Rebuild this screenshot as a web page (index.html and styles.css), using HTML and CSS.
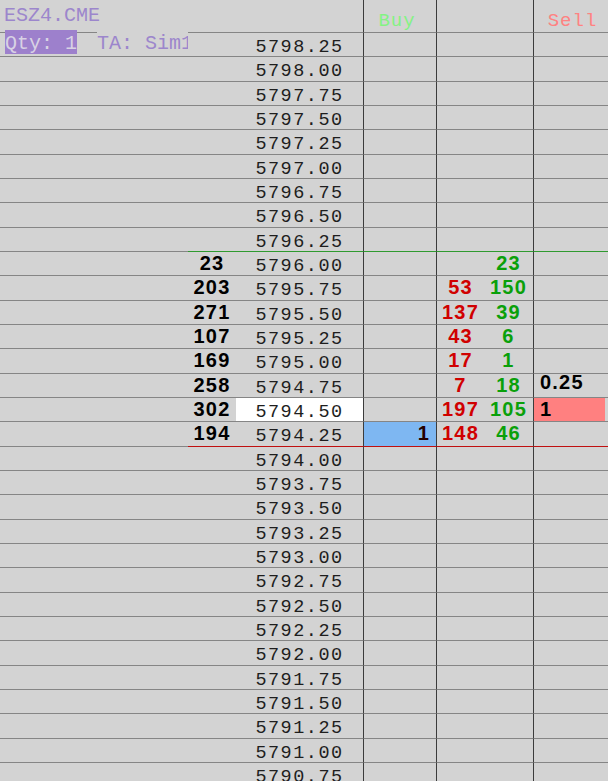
FILE: index.html
```html
<!DOCTYPE html>
<html lang="en">
<head>
  <meta charset="UTF-8" />
  <title>ESZ4.CME - Price Ladder</title>
  <meta name="viewport" content="width=device-width, initial-scale=1.0" />
  <link rel="stylesheet" href="styles.css">
</head>
<body>
  <div id="ladder" class="ladder">
    <!-- Header row -->
    <div class="row header">
      <div class="cell info"><span class="symbol">ESZ4.CME</span></div>
      <div class="cell vol"></div>
      <div class="cell price"></div>
      <div class="cell buy"><span class="buy-label">Buy</span></div>
      <div class="cell bid"></div>
      <div class="cell ask"></div>
      <div class="cell sell"><span class="sell-label">Sell</span></div>
      <div class="cell pad"></div>
    </div>
  </div>

  <script>
    const book = {
      "5796.00": { vol: 23, ask: 23 },
      "5795.75": { vol: 203, bid: 53, ask: 150 },
      "5795.50": { vol: 271, bid: 137, ask: 39 },
      "5795.25": { vol: 107, bid: 43, ask: 6 },
      "5795.00": { vol: 169, bid: 17, ask: 1 },
      "5794.75": { vol: 258, bid: 7, ask: 18, tick: "0.25" },
      "5794.50": { vol: 302, bid: 197, ask: 105, sell: 1, last: true },
      "5794.25": { vol: 194, bid: 148, ask: 46, buy: 1 }
    };

    const topPrice = 5798.25;
    const rowCount = 31;
    const askEdge = "5796.25";
    const bidEdge = "5794.25";

    function cell(cls, text) {
      const div = document.createElement("div");
      div.className = "cell " + cls;
      if (text !== undefined) div.textContent = text;
      return div;
    }

    function buildRow(price, index) {
      const data = book[price] || {};
      const row = document.createElement("div");
      row.className = "row";
      if (price === askEdge) row.classList.add("ask-edge");
      if (price === bidEdge) row.classList.add("bid-edge");

      const info = cell("info");
      if (index === 0) {
        info.innerHTML =
          '<div class="account"><span class="qty">Qty: 1</span><span class="ta">TA: Sim1</span></div>';
      }
      row.appendChild(info);

      row.appendChild(cell("vol num", data.vol));

      const priceCell = cell("price", price);
      if (data.last) priceCell.classList.add("last");
      row.appendChild(priceCell);

      const buy = cell("buy num", data.buy);
      if (data.buy) buy.classList.add("working");
      row.appendChild(buy);

      row.appendChild(cell("bid num", data.bid));
      row.appendChild(cell("ask num", data.ask));

      const sell = cell("sell num");
      if (data.sell) {
        sell.textContent = data.sell;
        sell.classList.add("working");
      } else if (data.tick) {
        sell.innerHTML = '<span class="tick">' + data.tick + '</span>';
      }
      row.appendChild(sell);

      row.appendChild(cell("pad"));
      return row;
    }

    const ladder = document.getElementById("ladder");
    for (let i = 0; i < rowCount; i++) {
      const price = (topPrice - i * 0.25).toFixed(2);
      ladder.appendChild(buildRow(price, i));
    }
  </script>
</body>
</html>
```

FILE: styles.css
```css
* {
  box-sizing: border-box;
}

body {
  margin: 0;
  background: #d3d3d3;
  height: 100vh;
  overflow: hidden;
  font-family: "Liberation Mono", monospace;
}

.ladder {
  width: 608px;
}

.row {
  display: grid;
  grid-template-columns: 188px 48px 127px 73px 48px 49px 72px 1fr;
  height: 24.33px;
}

.row.header {
  height: 33px;
}

.cell {
  border-bottom: 1px solid #858585;
  white-space: nowrap;
  min-width: 0;
}

.buy,
.bid,
.sell {
  border-left: 1px solid #3c3c3c;
}

/* order-book edges */
.ask-edge .cell:not(.info) {
  border-bottom-color: #2f9a2f;
}

.bid-edge .cell:not(.info) {
  border-bottom-color: #c01010;
}

/* header */
.symbol {
  display: block;
  padding: 6px 0 0 4px;
  font-size: 20px;
  line-height: 20px;
  color: #9c86cc;
}

.buy-label,
.sell-label {
  display: block;
  padding-top: 11px;
  text-align: center;
  font-size: 19px;
  line-height: 20px;
  letter-spacing: 1px;
}

.buy-label {
  color: #84f284;
}

.sell-label {
  color: #ff8282;
}

/* account line under the symbol */
.account {
  display: flex;
  margin: -3px 0 0 5px;
  height: 24px;
  font-size: 20px;
  line-height: 20px;
}

.qty {
  background: #9d80cc;
  color: #d8d2e4;
  padding-top: 4px;
}

.ta {
  margin-left: 20px;
  width: 91px;
  overflow: hidden;
  background: #d3d3d3;
  color: #9c86cc;
  padding-top: 4px;
}

/* prices */
.price {
  text-align: center;
  padding-top: 5px;
  font-size: 18.5px;
  line-height: 20px;
  letter-spacing: 1.5px;
  color: #1e1e1e;
  overflow: hidden;
}

.price.last {
  background: #fff;
}

/* numbers */
.num {
  font-family: "Liberation Sans", Arial, sans-serif;
  font-weight: bold;
  font-size: 20px;
  line-height: 20px;
  letter-spacing: 1.2px;
  padding-top: 1px;
  text-align: center;
  color: #000;
}

.bid {
  color: #d00000;
}

.ask {
  color: #0aa00a;
}

.buy {
  text-align: right;
  padding-right: 6px;
}

.buy.working {
  background: #7eb7f2;
  color: #240000;
}

.sell {
  text-align: left;
  padding-left: 6px;
}

.sell.working {
  background: #ff8080;
}

.tick {
  display: block;
  margin-top: -1px;
  line-height: 16px;
}
```
